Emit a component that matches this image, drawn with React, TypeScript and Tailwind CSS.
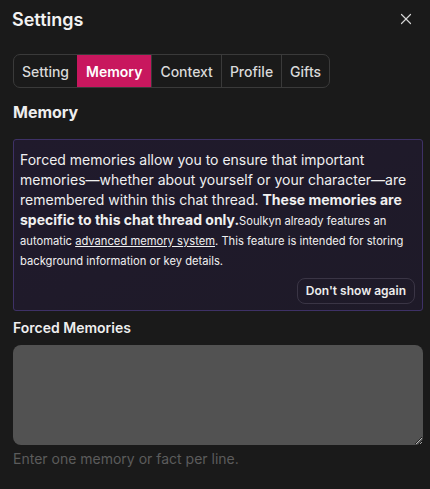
import { X } from 'lucide-react';

const tabs = ['Setting', 'Memory', 'Context', 'Profile', 'Gifts'];

export default function App() {
  return (
    <div className="w-[430px] h-[489px] bg-[#1a1a1a] text-white font-['Inter',sans-serif] pl-[13px] pr-[7px] overflow-hidden">
      {/* Header */}
      <div className="flex items-center justify-between h-[38px]">
        <h1 className="text-[18px] font-semibold text-[#f2f2f2] -ml-[1px]">Settings</h1>
        <X className="w-[18px] h-[18px] text-[#d4d4d4] mr-[8px]" strokeWidth={1.6} />
      </div>

      {/* Tabs */}
      <div className="mt-[16px] inline-flex h-[34px] rounded-[7px] border border-[#3a3a3a] overflow-hidden">
        {tabs.map((t, i) => (
          <div
            key={t}
            className={
              t === 'Memory'
                ? 'flex items-center px-[9px] text-[14px] font-semibold bg-[#c8175e] text-white'
                : 'flex items-center px-[8px] text-[14px] font-medium text-[#d9d9d9] ' +
                  (i > 1 ? 'border-l border-[#3a3a3a]' : '')
            }
          >
            {t}
          </div>
        ))}
      </div>

      {/* Memory */}
      <h2 className="mt-[12px] text-[16px] font-bold text-[#eeeeee] leading-[24px]">Memory</h2>

      <div className="mt-[15px] rounded-[3px] border border-[#3e3166] bg-gradient-to-br from-[#201a2c] to-[#1e1a28] px-[6px] pt-[10px] pb-[6px]">
        <p className="text-[14px] leading-[20px] text-[#f0f0f0]">
          Forced memories allow you to ensure that important memories—whether about yourself or your
          character—are remembered within this chat thread.{' '}
          <span className="font-bold">These memories are specific to this chat thread only.</span>
          <span className="text-[11.2px] leading-[18px]">
            Soulkyn already features an automatic{' '}
            <span className="underline">advanced memory system</span>. This feature is intended for
            storing background information or key details.
          </span>
        </p>
        <div className="flex justify-end mt-[8px] pr-[1px]">
          <button className="h-[26px] px-[8px] rounded-[8px] border border-[#3a3545] text-[12px] font-semibold text-[#ececec]">
            Don't show again
          </button>
        </div>
      </div>

      {/* Forced Memories */}
      <h3 className="mt-[7px] text-[14px] font-semibold text-[#eeeeee] leading-[20px]">Forced Memories</h3>
      <textarea className="mt-[7px] block w-full h-[100px] rounded-[8px] bg-[#525252] outline-none resize-y" />
      <p className="mt-[4px] text-[14px] text-[#5c5c5c] leading-[20px]">Enter one memory or fact per line.</p>
    </div>
  );
}
